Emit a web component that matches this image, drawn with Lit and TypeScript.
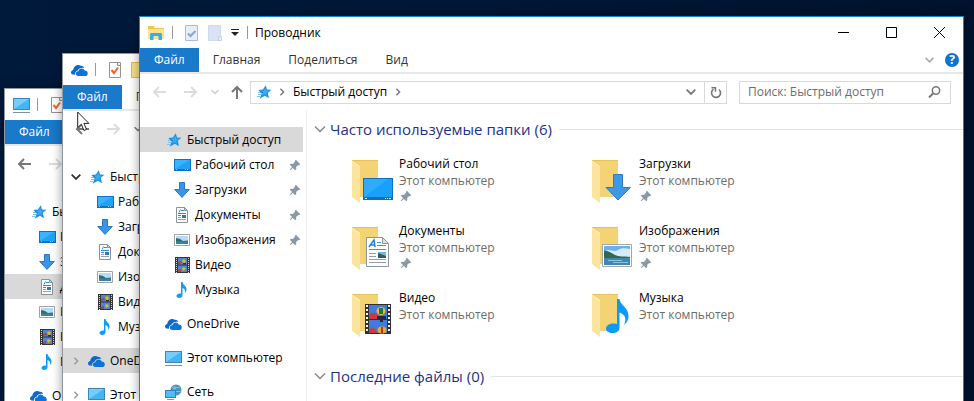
import { LitElement, html, svg, css, nothing, SVGTemplateResult, TemplateResult } from "lit";
import { customElement, property } from "lit/decorators.js";
import { classMap } from "lit/directives/class-map.js";

const icon = (size: number, body: SVGTemplateResult, box = `0 0 ${size} ${size}`): TemplateResult =>
  html`<svg width=${size} height=${size} viewBox=${box} aria-hidden="true">${body}</svg>`;

const art: Record<string, SVGTemplateResult> = {
  star: svg`<path stroke="#7fc0ee" fill="none" d="M3 8.500h3M3 10.500h3M2 12.500h3"/>
    <path fill="#1f8ee2" d="M10.800 1.200l1.200 4.300 4.400.2-3.600 3 1.100 5.600-4-2.600-5.200 3.100 2-5.300-3.400-3.600 4.600-.4z"/>
    <path fill="#3aaaf2" d="M10.500 3.500l.8 3 3 .3-3 2 .8 3-2.300-1.500-3 1 1.200-3-1.800-1.600 2.600-.5z"/>`,
  desktop: svg`<rect y="2" width="17" height="12" fill="#0b74c8"/><rect x="1" y="3" width="15" height="9" fill="#1fa3fa"/>
    <path d="M1 12V3h14z" fill="#3db2ff"/><path stroke="#8fcdf7" d="M2 12.500h1M11 12.500h1M13 12.500h1" />`,
  downloads: svg`<path fill="#3996e6" stroke="#2a78c2" d="M5.500.5h5v7h4.800L8 15.400.7 7.500h4.800z"/>`,
  documents: svg`<path fill="#fcfcfc" stroke="#8b9298" d="M2.500.5h8l3 3v12h-11z"/><path fill="#d5dadd" stroke="#8b9298" d="M10.500.5v3h3z"/>
    <path stroke="#2c8fd4" d="M7 3.500h3M4 6.500h8M5 5.500l1.500-3M4 8.500h3"/><path stroke="#8fa5b5" d="M4 10.500h3M4 12.500h8"/><rect x="8" y="8" width="4" height="3" fill="#38779b"/>`,
  pictures: svg`<path fill="#fff" stroke="#a3a3a3" d="M.5 2.500h15v11H.5z"/><rect x="2" y="4" width="12" height="8" fill="#b5dbf8"/>
    <path fill="#2f6f63" d="M2 6l4 1 3 2 5-.5V10H2z"/><path fill="#3a7fae" d="M2 9.500h12V12H2z"/>`,
  video: svg`<rect x="1" width="15" height="16" fill="#333538"/><rect x="4" y="1" width="9" height="6.500" fill="#4c86d8"/><rect x="4" y="8.500" width="9" height="6.500" fill="#4c86d8"/>
    <path stroke="#d7d9db" stroke-dasharray="1 1" d="M2.500 1v15M14.500 1v15"/><path fill="#e3b51d" d="M8 3.500l2-1.500 2 2-2 3zM8 11l2-1 2 2-3 2z"/><path fill="#c3392b" d="M4 5l3-1 1 2-4 1zM4 13l3-1v3H4z"/><path fill="#27303c" d="M9 6h3v1.500H9z"/>`,
  music: svg`<path fill="#109bf5" d="M7 0h1.500c.4 3 4 3.600 4 7.500 0 1.500-.5 2.500-1.300 3.500.4-2.800-.6-4.300-2.700-5v7.200c0 1.700-1.500 2.800-3.200 2.800S2.400 15.100 2.500 13.800c.2-1.800 2.500-2.900 4.500-2.200z"/>`,
  onedrive: svg`<path fill="#1068c4" d="M1.500 12.500C-.8 11.500-.2 8.200 2.300 8 2.500 4.300 6.500 1.500 9.800 3.800c1.700-.1 3 .8 3.400 2.200C10 5.400 7.500 6.500 6.800 8.500 4.500 9 3.600 11 4 12.800z"/>
    <path fill="#0a74d8" d="M7 14c-3.300-.6-2.800-4.900.4-4.700.3-3.400 5.300-4 6.200-.8 3.700-.2 4.200 5 1.300 5.500z"/>`,
  pc: svg`<rect y="1" width="17" height="12" fill="#3b87b8"/><rect x="1" y="2" width="15" height="10" fill="#45b4f3"/><path d="M1 12V2h15z" fill="#76cdf9"/><path stroke="#7893a5" d="M0 15.500h17"/>`,
  network: svg`<circle cx="11" cy="6" r="5.500" fill="#4a95bd"/><path stroke="#7fb8d3" fill="none" d="M7 3.500h8M6 7.500h10"/><path fill="#7fb8d3" d="M9 2l3 1-2 3-2-1z"/>
    <path fill="#2684be" d="M0 6h11v8H0z"/><path fill="#51bdf5" d="M1 7h9v6H1z"/><path stroke="#7c99aa" d="M2 15.500h7"/>`,
  explorer: svg`<path fill="#f2c84c" d="M0 1h6l1 2h9v11H0z"/><path fill="#fde291" d="M0 4h16v10H0z"/><path fill="#37aee6" d="M2 15V9.500C2 8.600 2.700 8 3.500 8h9c.8 0 1.500.6 1.500 1.500V15h-3.500v-4h-5v4z"/>`,
  check: svg`<path fill="#fff" stroke="#929292" d="M1.500.5h11v15h-11z"/><path fill="#ddd" stroke="#929292" d="M9.500.5v3h3"/><path fill="none" stroke="#ec6432" stroke-width="2" d="M3.500 8l2.500 3 4-5.500"/>`,
  checkPale: svg`<path fill="#e8eef8" stroke="#aebbd0" d="M.5.5h12v15H.5z"/><path fill="none" stroke="#8ca5ca" stroke-width="2" d="M3 8.500l2.500 2.500 5-5"/>`,
  newPale: svg`<path fill="#d9e3f3" stroke="#cdd9ec" d="M.5.5h12v15H.5z"/><path fill="#e7edf7" stroke="#c5d2e8" d="M10.500 11.500h3v4h-3z"/>`,
  newFolder: svg`<path fill="#fbe08a" stroke="#dcb94f" d="M.5.5h14v15H.5z"/>`,
  pin: svg`<path fill="#8a98a5" d="M9 2l5 5-1.300 1.200-1-.3-2.500 2.500.3 2.300L8.300 14 5.600 11.300 2.500 14l-.6-.5 2.700-3.200L2 7.700 3.200 6.500l2.400.3L8 4.300l-.3-1z"/>`,
};

const badges: Record<string, SVGTemplateResult> = {
  desktop: svg`<path fill="#fff" d="M9 39h5v4H9z"/><rect x="12" y="18" width="30" height="22" fill="#0e70bd"/><rect x="13" y="19" width="28" height="18" fill="#18a0fb"/><path fill="#3fb3fd" d="M13 37V19h24z" opacity=".6"/><path stroke="#d6efff" d="M14 38.500h2M34 38.500h1M36 38.500h1M38 38.500h2"/>`,
  downloads: svg`<path fill="#3c99e8" stroke="#2d7cc5" d="M22.500 14.500h9v13h8L27 40 15 27.500h7.500z"/>`,
  documents: svg`<path fill="#fdfdfd" stroke="#8c959c" d="M15.500 10.500h16l6 6v23h-22z"/><path fill="#dce1e5" stroke="#8c959c" d="M31.500 10.500v6h6z"/><path fill="none" stroke="#1e86cf" stroke-width="1.500" d="M18 20l5-7 1 7M20 18h4"/><path stroke="#3b97d8" d="M26 15.500h4M26 18.500h9M18 22.500h17"/><path stroke="#93a1aa" d="M18 26.500h7M18 29.500h7M18 32.500h17M18 35.500h17"/><rect x="27" y="25" width="8" height="5" fill="#74b7df"/><path fill="#285f67" d="M27 26l8 3v2h-8z"/>`,
  pictures: svg`<path fill="#fff" stroke="#a6a6a6" d="M11.500 17.500h29v22h-29z"/><rect x="13" y="19" width="26" height="19" fill="#68b1f0"/><path fill="#d6ecfc" d="M13 25c6-5 8 1 14-2s8-1 12-1v8H13z"/><path fill="#2f6a4d" d="M13 24c4-1 7 2 11 4s9 1 15 2v2H13z"/><path fill="#3e87b5" d="M13 31h26v7H13z"/><path stroke="#8fc2df" d="M17 33.500h14M22 35.500h15"/>`,
  video: svg`<rect x="14" y="10" width="26" height="30" fill="#303030"/><rect x="18" y="11" width="18" height="14" fill="#427bdc"/><rect x="18" y="26" width="18" height="13" fill="#427bdc"/><path stroke="#f5f5f5" stroke-width="2" stroke-dasharray="2 2" d="M16 11v28M38 11v28"/><ellipse cx="30" cy="17" rx="4.500" ry="4" fill="#efb72a"/><path fill="#1f783b" d="M28 14h4v6h-4z"/><path fill="#ce3940" d="M18 22c2-4 5-4 9-1v4h-9zM18 36l4-3 5 6h-9z"/><path fill="#252c38" d="M26 22h9v3h-3v3h-3v-3h-3z"/><ellipse cx="31" cy="36" rx="4.500" ry="3.500" fill="#e4ad26"/><path fill="#bd3028" d="M30 33h2v6h-2z"/>`,
  music: svg`<path fill="#0b9af4" d="M26 5h2.500c.5 6 9 8.500 9 17 0 4-1.500 6.500-4.500 9 2.500-5.500 2-10-4.500-12.500V34c0 3-3.200 5-7 5s-6.500-1.700-6.500-4.500c0-3.600 5.500-6 11-4.500z"/>`,
};

const chevronDown = (w = 10) =>
  html`<svg width=${w} height="6" viewBox="0 0 10 6" aria-hidden="true"><path d="M.7.7L5 5 9.300.7" fill="none" stroke="currentColor" stroke-width="1.800"/></svg>`;
const chevronRight = () =>
  html`<svg width="6" height="8" viewBox="0 0 6 10" aria-hidden="true"><path d="M1 1l4 4-4 4" fill="none" stroke="currentColor" stroke-width="1.800"/></svg>`;

interface Item { id: string; label: string; child?: boolean; pinned?: boolean; }
const tree: Item[] = [
  { id: "star", label: "Быстрый доступ" },
  { id: "desktop", label: "Рабочий стол", child: true, pinned: true },
  { id: "downloads", label: "Загрузки", child: true, pinned: true },
  { id: "documents", label: "Документы", child: true, pinned: true },
  { id: "pictures", label: "Изображения", child: true, pinned: true },
  { id: "video", label: "Видео", child: true },
  { id: "music", label: "Музыка", child: true },
  { id: "onedrive", label: "OneDrive" },
  { id: "pc", label: "Этот компьютер" },
  { id: "network", label: "Сеть" },
];
const tiles = tree.filter((i) => i.child);

@customElement("explorer-window")
export class ExplorerWindow extends LitElement {
  @property() symbol = "explorer";
  @property() selected = "star";
  @property({ type: Number }) rows = tree.length;
  @property({ type: Boolean, reflect: true }) active = false;
  @property({ type: Boolean }) expanders = false;
  @property({ type: Boolean }) history = false;

  static styles = css`
    :host { display: flex; flex-direction: column; box-sizing: border-box; overflow: hidden; background: #fff;
      border: 1px solid #8f989f; border-bottom: 0; box-shadow: 0 0 10px rgba(0, 0, 0, 0.4);
      font: 12px/16px "Open Sans", "Noto Sans", sans-serif; color: #000; }
    :host([active]) { border-color: #1883d7; }
    svg { display: block; flex: none; overflow: visible; }
    button { font: inherit; color: inherit; background: none; border: 0; padding: 0; margin: 0; }
    ul { list-style: none; margin: 0; padding: 0; }
    .title { display: flex; align-items: center; height: 31px; flex: none; padding-left: 8px; }
    .title h1 { font: inherit; margin: 0; flex: 1; }
    .sep { width: 1px; height: 13px; background: #9a9a9a; margin: 0 12px 0 8px; }
    .sep.tight { margin: 0 7px 0 8px; }
    .quick { margin-right: 7px; }
    .win { width: 48px; height: 31px; display: grid; place-items: center; }
    .ribbon { display: flex; height: 24px; flex: none; border-bottom: 2px solid #e8e8e8; align-items: center; color: #333; }
    .tab { height: 24px; padding: 0 14px; }
    .tab.file { background: #1979ca; color: #fff; }
    .grow { flex: 1; }
    .fold { color: #aaa; margin-right: 11px; }
    .help { width: 14px; height: 14px; border-radius: 50%; background: #0a74d1; color: #fff; font-weight: 700; line-height: 14px; margin-right: 4px; }
    .nav { display: flex; align-items: center; height: 36px; flex: none; padding: 0 12px; color: #777; }
    .arrow { color: #dcdcdc; margin-right: 18px; }
    .arrow.on { color: #777; }
    .recent { color: #ccc; margin-right: 11px; }
    .recent.on { color: #777; }
    .nav .up { margin-right: 6px; }
    .nav .next { margin-right: 13px; }
    .address { flex: 1; display: flex; align-items: center; height: 23px; box-sizing: border-box; border: 1px solid #d9d9d9; padding-left: 4px; gap: 8px; }
    .crumb { color: #000; }
    .refresh { border-left: 1px solid #d9d9d9; width: 22px; height: 21px; display: grid; place-items: center; }
    .search { width: 212px; height: 23px; box-sizing: border-box; margin-left: 12px; border: 1px solid #d9d9d9; display: flex; align-items: center; padding: 0 9px 0 8px; }
    .search input { font: inherit; border: 0; padding: 0; flex: 1; min-width: 0; outline: 0; background: none; }
    .search input::placeholder { color: #6d6d6d; opacity: 1; }
    .body { display: flex; flex: 1; min-height: 0; }
    .side { width: 166px; flex: none; padding-top: 17px; border-right: 1px solid #f0f0f0; }
    .side li { display: flex; align-items: center; height: 25px; margin-right: 3px; white-space: nowrap; }
    .side li.child + li.root, .side li.root + li.root { margin-top: 9px; }
    .side li.selected { background: #d9d9d9; }
    .side .twist { width: 25px; display: grid; place-items: center; color: #999; }
    .side .twist.open { color: #333; }
    .entry { display: flex; align-items: center; gap: 6px; flex: 1; text-align: left; height: 25px; }
    .child .entry { padding-left: 9px; gap: 5px; }
    .pin { margin-right: 1px; }
    .main { flex: 1; min-width: 0; padding-top: 7px; }
    .group { display: flex; align-items: center; height: 24px; margin: 0; padding-left: 8px; font-size: 15px; line-height: 24px; font-weight: 400; color: #1e3287; }
    .group::after { content: ""; flex: 1; height: 1px; background: #e2e2e2; margin-left: 7px; }
    .group button { display: flex; align-items: center; gap: 5px; white-space: nowrap; }
    .group svg { color: #888; }
    .tiles { display: grid; grid-template-columns: repeat(auto-fill, 240px); margin: 0 0 8px; padding: 14px 0 0 44px; }
    .tile { display: flex; gap: 4px; height: 67px; text-align: left; align-items: flex-start; width: 100%; }
    .tile svg.folder { margin-top: 5px; }
    .lines { display: flex; flex-direction: column; line-height: 17px; }
    .where { color: #6d6d6d; }
  `;

  private row(item: Item) {
    const sel = item.id === this.selected;
    const twist = this.expanders && !item.child;
    return html`<li class=${classMap({ root: !item.child, child: !!item.child, selected: sel })}>
      <span class=${classMap({ twist: true, open: item.id === "star" })}>
        ${twist ? (item.id === "star" ? chevronDown() : chevronRight()) : nothing}</span>
      <button class="entry">${icon(16, art[item.id])}<span>${item.label}</span></button>
      ${item.pinned && this.active ? html`<span class="pin">${icon(14, art.pin, "0 0 16 16")}</span>` : nothing}
    </li>`;
  }

  private tile(item: Item) {
    return html`<li><button class="tile">
      <svg class="folder" width="44" height="44" viewBox="0 0 44 44" aria-hidden="true">
        <path fill="#f3d373" d="M1 0h26v37H9z"/><path fill="#e7c15b" d="M1 0h26v1H2z"/>
        <path fill="#fbe4a0" d="M1 1l8 5v37l-8-6z"/><path fill="#fff0c2" d="M1 1l8 5v1L1 2z"/>
        ${badges[item.id]}
      </svg>
      <span class="lines"><span>${item.label}</span><span class="where">Этот компьютер</span>
        ${item.pinned ? icon(14, art.pin, "0 0 16 16") : nothing}</span>
    </button></li>`;
  }

  private group(label: string) {
    return html`<h2 class="group"><button aria-expanded="true">
      <svg width="10" height="6" viewBox="0 0 10 6" aria-hidden="true"><path d="M0 .5l5 5 5-5" fill="none" stroke="currentColor" stroke-width="1.500"/></svg>${label}</button></h2>`;
  }

  private arrow(label: string, d: string, cls: string) {
    return html`<button class=${cls} aria-label=${label}><svg width="14" height="12" viewBox="0 0 14 12">
      <path d=${d} fill="none" stroke="currentColor" stroke-width="2"/></svg></button>`;
  }

  render() {
    return html`
      <header class="title">
        ${icon(16, art[this.symbol])}<span class="sep"></span>
        <button class="quick" aria-label="Свойства">${icon(16, this.active ? art.checkPale : art.check)}</button>
        <button class="quick" aria-label="Новая папка">${icon(16, this.active ? art.newPale : art.newFolder)}</button>
        ${this.active ? html`
          <button aria-label="Настройка панели"><svg width="8" height="8" viewBox="0 0 8 8"><path d="M0 0h8v1H0zM0 3h8L4 7z" fill="#222"/></svg></button>
          <span class="sep tight"></span>
          <h1>Проводник</h1>
          <button class="win" aria-label="Свернуть"><svg width="11" height="11"><path d="M0 5.500h11" stroke="currentColor"/></svg></button>
          <button class="win" aria-label="Развернуть"><svg width="11" height="11"><path d="M.5.5h10v10H.5z" fill="none" stroke="currentColor"/></svg></button>
          <button class="win" aria-label="Закрыть"><svg width="11" height="11"><path d="M0 0l11 11M11 0L0 11" stroke="currentColor"/></svg></button>` : nothing}
      </header>
      <div class="ribbon">
        <button class="tab file">Файл</button><button class="tab">Главная</button>
        ${this.active ? html`<button class="tab">Поделиться</button><button class="tab">Вид</button><span class="grow"></span>
          <button class="fold" aria-label="Свернуть ленту">${chevronDown(9)}</button><button class="help">?</button>` : nothing}
      </div>
      <div class="nav">
        ${this.arrow("Назад", "M14 6H2M7 1L2 6l5 5", this.history ? "arrow on" : "arrow")}
        ${this.arrow("Вперёд", "M0 6h12M7 1l5 5-5 5", "arrow next")}
        <button class=${this.history ? "recent on" : "recent"} aria-label="Последние расположения">${chevronDown(8)}</button>
        ${this.active ? html`
          ${this.arrow("Вверх", "M7 13V1M2 6l5-5 5 5", "up")}
          <div class="address">
            ${icon(16, art.star)}${chevronRight()}<button class="crumb">Быстрый доступ</button>${chevronRight()}
            <span class="grow"></span><button aria-label="Журнал адресов">${chevronDown(10)}</button>
            <button class="refresh" aria-label="Обновить"><svg width="12" height="13" viewBox="0 0 12 13"><path d="M3.500 3.200a4.500 4.500 0 1 0 5.500.3" fill="none" stroke="currentColor" stroke-width="1.600"/><path d="M1.500 1.800h4v4" fill="none" stroke="currentColor" stroke-width="1.500"/></svg></button>
          </div>
          <label class="search"><input type="search" aria-label="Поиск" placeholder="Поиск: Быстрый доступ" />
            <svg width="13" height="12" viewBox="0 0 13 12" aria-hidden="true"><circle cx="8" cy="4.500" r="3.700" fill="none" stroke="currentColor" stroke-width="1.500"/><path d="M5.500 7L1 11.500" stroke="currentColor" stroke-width="2"/></svg></label>` : nothing}
      </div>
      <div class="body">
        <ul class="side">${tree.slice(0, this.rows).map((i) => this.row(i))}</ul>
        ${this.active ? html`<section class="main">
          ${this.group("Часто используемые папки (6)")}
          <ul class="tiles">${tiles.map((t) => this.tile(t))}</ul>
          ${this.group("Последние файлы (0)")}
        </section>` : nothing}
      </div>`;
  }
}

@customElement("app-root")
export class AppRoot extends LitElement {
  static styles = css`
    :host { display: block; position: relative; height: 100vh; overflow: hidden; background: linear-gradient(90deg, #001a3c 0, #001735 50%, #00122d 100%); }
    explorer-window { position: absolute; bottom: 0; }
    .back { left: 4px; right: 144px; top: 88px; }
    .middle { left: 62px; right: 86px; top: 53px; }
    .front { left: 139px; right: 10px; top: 16px; }
    .cursor { position: absolute; left: 77px; top: 111px; }
  `;
  render() {
    return html`
      <explorer-window class="back" symbol="pc" selected="documents" rows="8" history></explorer-window>
      <explorer-window class="middle" symbol="onedrive" selected="onedrive" rows="9" expanders history></explorer-window>
      <explorer-window class="front" active></explorer-window>
      <svg class="cursor" width="14" height="21" viewBox="0 0 14 21" aria-hidden="true"><path fill="#fff" stroke="#222" d="M.7 1v15.500l3.600-3.300 2.600 6.300 2.600-1.100-2.600-6h5z"/></svg>`;
  }
}
